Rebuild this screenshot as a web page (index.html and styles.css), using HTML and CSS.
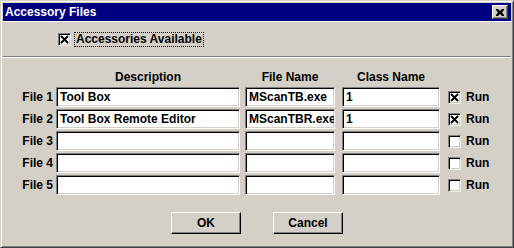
FILE: index.html
```html
<!DOCTYPE html>
<html>
<head>
<meta charset="utf-8">
<link rel="stylesheet" href="styles.css">
</head>
<body>
<div class="window">
  <div class="titlebar">
    <span class="title">Accessory Files</span>
    <span class="close"><svg width="8" height="7" viewBox="0 0 8 7"><path d="M0 0h2l2 2 2-2h2v1l-2 2.5 2 2.5v1h-2l-2-2-2 2h-2v-1l2-2.5-2-2.5z" fill="#000"/></svg></span>
  </div>
  <div class="client">
    <div class="avail">
      <span class="check"><svg width="9" height="9" viewBox="0 0 9 9"><path d="M1 1l7 7M8 1l-7 7" stroke="#000" stroke-width="2"/></svg></span>
      <span class="focus">Accessories Available</span>
    </div>
    <div class="sep"></div>
    <div class="grid">
      <div class="row head">
        <span class="lbl"></span>
        <span class="c-desc">Description</span>
        <span class="c-file">File Name</span>
        <span class="c-class">Class Name</span>
      </div>
      <div class="row">
        <span class="lbl">File 1</span>
        <span class="field c-desc">Tool Box</span>
        <span class="field c-file">MScanTB.exe</span>
        <span class="field c-class">1</span>
        <span class="run"><span class="check"><svg width="9" height="9" viewBox="0 0 9 9"><path d="M1 1l7 7M8 1l-7 7" stroke="#000" stroke-width="2"/></svg></span>Run</span>
      </div>
      <div class="row">
        <span class="lbl">File 2</span>
        <span class="field c-desc">Tool Box Remote Editor</span>
        <span class="field c-file">MScanTBR.exe</span>
        <span class="field c-class">1</span>
        <span class="run"><span class="check"><svg width="9" height="9" viewBox="0 0 9 9"><path d="M1 1l7 7M8 1l-7 7" stroke="#000" stroke-width="2"/></svg></span>Run</span>
      </div>
      <div class="row">
        <span class="lbl">File 3</span>
        <span class="field c-desc"></span>
        <span class="field c-file"></span>
        <span class="field c-class"></span>
        <span class="run"><span class="check"></span>Run</span>
      </div>
      <div class="row">
        <span class="lbl">File 4</span>
        <span class="field c-desc"></span>
        <span class="field c-file"></span>
        <span class="field c-class"></span>
        <span class="run"><span class="check"></span>Run</span>
      </div>
      <div class="row">
        <span class="lbl">File 5</span>
        <span class="field c-desc"></span>
        <span class="field c-file"></span>
        <span class="field c-class"></span>
        <span class="run"><span class="check"></span>Run</span>
      </div>
    </div>
    <div class="buttons">
      <span class="btn ok">OK</span>
      <span class="btn cancel">Cancel</span>
    </div>
  </div>
</div>
</body>
</html>
```

FILE: styles.css
```css
* { box-sizing: border-box; }
html, body { margin: 0; padding: 0; }
body {
  background: #d4d0c8;
  font-family: "Liberation Sans", Arial, sans-serif;
  font-weight: bold;
  font-size: 12px;
  color: #000;
}
.window {
  width: 514px;
  height: 248px;
  border: 1px solid;
  border-color: #d4d0c8 #404040 #404040 #d4d0c8;
  box-shadow: inset 1px 1px #fff, inset -1px -1px #808080;
  padding: 2px;
  background: #d4d0c8;
  display: flex;
  flex-direction: column;
}
.titlebar {
  height: 18px;
  background: #000080;
  color: #fff;
  display: flex;
  align-items: center;
  justify-content: space-between;
  padding: 0 3px 0 2px;
  flex: none;
}
.title { font-size: 12px; }
.close {
  width: 16px;
  height: 14px;
  background: #d4d0c8;
  border: 1px solid;
  border-color: #fff #404040 #404040 #fff;
  box-shadow: inset -1px -1px #808080;
  display: flex;
  align-items: center;
  justify-content: center;
}
.client {
  border-top: 1px solid #fff;
  flex: 1;
  display: flex;
  flex-direction: column;
}
.avail {
  display: flex;
  align-items: center;
  margin: 10px 0 0 55px;
  height: 15px;
}
.check {
  width: 13px;
  height: 13px;
  background: #fff;
  border: 1px solid;
  border-color: #808080 #e8f0e8 #e8f0e8 #808080;
  box-shadow: inset 1px 1px #000, inset -1px -1px #d4d0c8;
  display: inline-flex;
  align-items: center;
  justify-content: center;
  flex: none;
}
.focus {
  margin-left: 3px;
  padding: 0 1px 0 1px;
  border: 1px dotted #000;
  line-height: 13px;
}
.sep {
  margin-top: 9px;
  height: 2px;
  border-top: 1px solid #808080;
  border-bottom: 1px solid #fff;
}
.grid {
  display: flex;
  flex-direction: column;
  gap: 2px;
  margin-top: 11px;
}
.row {
  display: flex;
  align-items: center;
  height: 20px;
}
.row.head { height: 16px; }
.lbl {
  width: 50px;
  text-align: right;
  margin-right: 3px;
  flex: none;
}
.c-desc { width: 184px; flex: none; }
.c-file { width: 90px; margin-left: 5px; flex: none; }
.c-class { width: 98px; margin-left: 7px; flex: none; }
.head span { text-align: center; }
.field {
  height: 20px;
  background: #fff;
  border: 1px solid;
  border-color: #808080 #fff #fff #808080;
  box-shadow: inset 1px 1px #000, inset -1px -1px #d4d0c8;
  padding: 0 3px;
  line-height: 18px;
  white-space: nowrap;
  overflow: hidden;
}
.run {
  margin-left: 8px;
  display: flex;
  align-items: center;
  gap: 5px;
}
.buttons {
  display: flex;
  justify-content: center;
  gap: 32px;
  margin-top: 17px;
}
.btn {
  width: 70px;
  height: 22px;
  border: 1px solid;
  border-color: #fff #000 #000 #fff;
  box-shadow: inset -1px -1px #808080, inset 1px 1px #d4d0c8;
  display: flex;
  align-items: center;
  justify-content: center;
}
```
